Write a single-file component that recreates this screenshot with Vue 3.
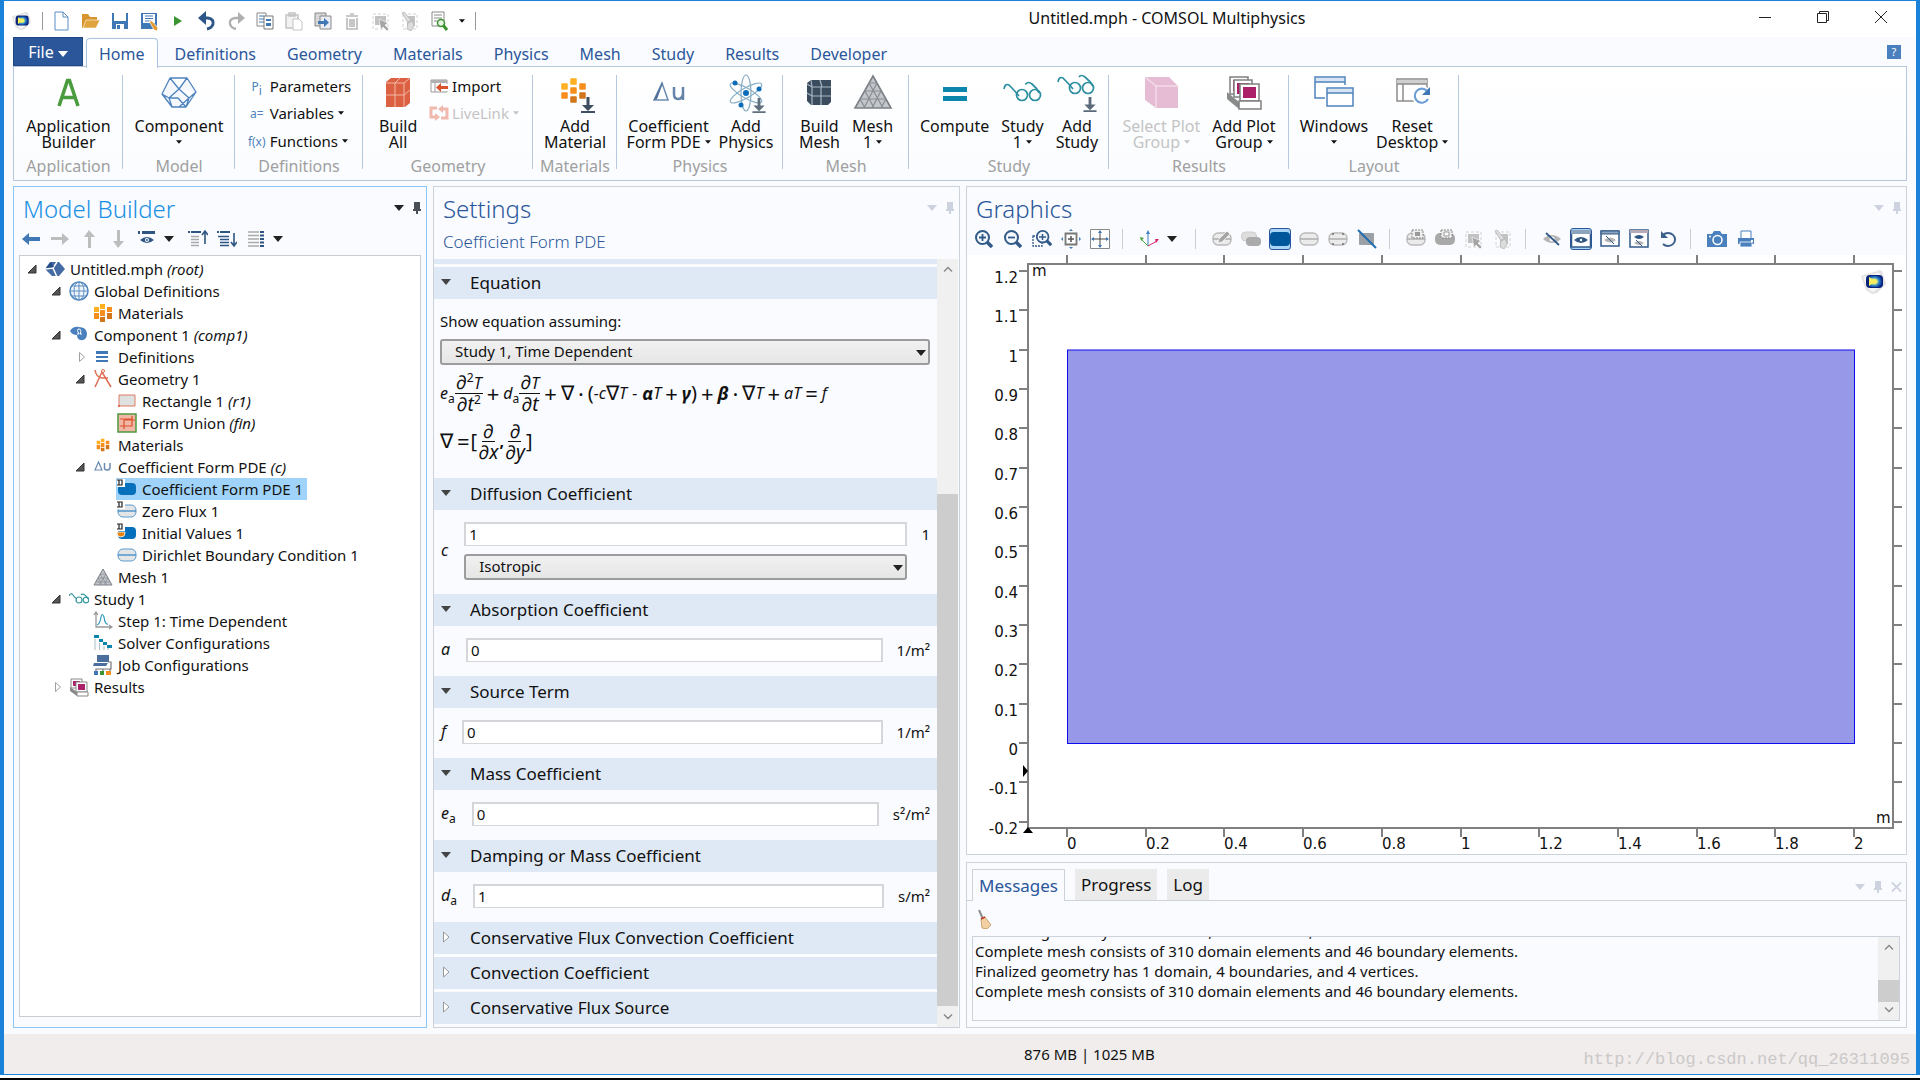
<script setup>
import { ref, computed } from 'vue'

// --- Quick access bar ---
const quickActions = [
  { icon: 'new', label: 'New' },
  { icon: 'open', label: 'Open' },
  { icon: 'save', label: 'Save' },
  { icon: 'save-as', label: 'Save as' },
  { icon: 'run', label: 'Run' },
  { icon: 'undo', label: 'Undo' },
  { icon: 'redo', label: 'Redo' },
  { icon: 'copy', label: 'Copy' },
  { icon: 'paste', label: 'Paste' },
  { icon: 'duplicate', label: 'Duplicate' },
  { icon: 'trash', label: 'Delete' },
  { icon: 'select-box', label: 'Select box' },
  { icon: 'clear-sel', label: 'Clear selection' },
  { icon: 'find', label: 'Find' }
]

// --- Ribbon ---
const tabs = ['Home', 'Definitions', 'Geometry', 'Materials', 'Physics', 'Mesh', 'Study', 'Results', 'Developer']
const activeTab = ref('Home')

const ribbon = [
  { name: 'Application', width: 109, big: [{ icon: 'app', lines: ['Application', 'Builder'] }] },
  { name: 'Model', width: 112, big: [{ icon: 'component', lines: ['Component', ''], menu: true }] },
  {
    name: 'Definitions',
    width: 128,
    big: [],
    small: [
      { glyph: 'P', sub: 'i', label: 'Parameters' },
      { glyph: 'a=', label: 'Variables', menu: true },
      { glyph: 'f(x)', label: 'Functions', menu: true }
    ]
  },
  {
    name: 'Geometry',
    width: 170,
    loose: true,
    big: [{ icon: 'build-all', lines: ['Build', 'All'] }],
    small: [
      { icon: 'import', label: 'Import' },
      { icon: 'livelink', label: 'LiveLink', menu: true, disabled: true }
    ]
  },
  { name: 'Materials', width: 84, big: [{ icon: 'add-material', lines: ['Add', 'Material'] }] },
  {
    name: 'Physics',
    width: 166,
    big: [
      { icon: 'delta-u-big', lines: ['Coefficient', 'Form PDE'], menu: true },
      { icon: 'add-physics', lines: ['Add', 'Physics'] }
    ]
  },
  {
    name: 'Mesh',
    width: 126,
    loose: true,
    big: [
      { icon: 'build-mesh', lines: ['Build', 'Mesh'] },
      { icon: 'mesh-big', lines: ['Mesh', '1'], menu: true }
    ]
  },
  {
    name: 'Study',
    width: 200,
    loose: true,
    big: [
      { icon: 'compute', lines: ['Compute', ''] },
      { icon: 'study-big', lines: ['Study', '1'], menu: true },
      { icon: 'add-study', lines: ['Add', 'Study'] }
    ]
  },
  {
    name: 'Results',
    width: 180,
    loose: true,
    big: [
      { icon: 'select-plot', lines: ['Select Plot', 'Group'], menu: true, disabled: true },
      { icon: 'add-plot', lines: ['Add Plot', 'Group'], menu: true }
    ]
  },
  {
    name: 'Layout',
    width: 170,
    big: [
      { icon: 'windows', lines: ['Windows', ''], menu: true },
      { icon: 'reset', lines: ['Reset', 'Desktop'], menu: true }
    ]
  }
]

// --- Model tree ---
const builderTools = [
  { icon: 'arrow-left', label: 'Previous' },
  { icon: 'arrow-right', label: 'Next' },
  { icon: 'arrow-up', label: 'Move up' },
  { icon: 'arrow-down', label: 'Move down' },
  { icon: 'show', label: 'Show' },
  { menu: true, label: 'Show options' },
  { icon: 'collapse', label: 'Collapse all' },
  { icon: 'expand', label: 'Expand all' },
  { icon: 'columns', label: 'Node text' },
  { menu: true, label: 'Node text options' }
]

const nodes = [
  { level: 0, icon: 'root', text: 'Untitled.mph', tag: '(root)', open: true },
  { level: 1, icon: 'globe', text: 'Global Definitions', open: true },
  { level: 2, icon: 'materials', text: 'Materials' },
  { level: 1, icon: 'comp', text: 'Component 1', tag: '(comp1)', open: true },
  { level: 2, icon: 'defs', text: 'Definitions', open: false },
  { level: 2, icon: 'geometry', text: 'Geometry 1', open: true },
  { level: 3, icon: 'rectangle', text: 'Rectangle 1', tag: '(r1)' },
  { level: 3, icon: 'union', text: 'Form Union', tag: '(fin)' },
  { level: 2, icon: 'materials-small', text: 'Materials' },
  { level: 2, icon: 'delta-u', text: 'Coefficient Form PDE', tag: '(c)', open: true },
  { level: 3, icon: 'domain', text: 'Coefficient Form PDE 1' },
  { level: 3, icon: 'boundary-d', text: 'Zero Flux 1' },
  { level: 3, icon: 'initial', text: 'Initial Values 1' },
  { level: 3, icon: 'boundary', text: 'Dirichlet Boundary Condition 1' },
  { level: 2, icon: 'mesh', text: 'Mesh 1' },
  { level: 1, icon: 'study', text: 'Study 1', open: true },
  { level: 2, icon: 'time', text: 'Step 1: Time Dependent' },
  { level: 2, icon: 'solver', text: 'Solver Configurations' },
  { level: 2, icon: 'job', text: 'Job Configurations' },
  { level: 1, icon: 'results', text: 'Results', open: false }
]
const selectedNode = ref('Coefficient Form PDE 1')

// --- Settings ---
const equationForm = ref('Study 1, Time Dependent')
const diffusion = ref('1')
const isotropy = ref('Isotropic')
const coefficients = ref([
  { id: 'absorption', title: 'Absorption Coefficient', symbol: 'a', sub: '', value: '0', unit: '1/m²' },
  { id: 'source', title: 'Source Term', symbol: 'f', sub: '', value: '0', unit: '1/m²' },
  { id: 'mass', title: 'Mass Coefficient', symbol: 'e', sub: 'a', value: '0', unit: 's²/m²' },
  { id: 'damping', title: 'Damping or Mass Coefficient', symbol: 'd', sub: 'a', value: '1', unit: 's/m²' }
])
const closedSections = ['Conservative Flux Convection Coefficient', 'Convection Coefficient', 'Conservative Flux Source']

// --- Graphics ---
const graphicsTools = [
  { icon: 'zoom-in', label: 'Zoom in' },
  { icon: 'zoom-out', label: 'Zoom out' },
  { icon: 'zoom-box', label: 'Zoom box' },
  { icon: 'zoom-sel', label: 'Zoom to selection' },
  { icon: 'zoom-ext', label: 'Zoom extents' },
  { sep: true },
  { icon: 'axes', label: 'View' },
  { menu: true, label: 'View options' },
  { sep: true },
  { icon: 'pick-obj', label: 'Select objects' },
  { icon: 'pick-both', label: 'Select entities' },
  { icon: 'pick-domain', label: 'Select domains', on: true },
  { icon: 'pick-boundary', label: 'Select boundaries' },
  { icon: 'pick-point', label: 'Select points' },
  { icon: 'pick-none', label: 'Selection off' },
  { sep: true },
  { icon: 'add-sel', label: 'Add to selection' },
  { icon: 'remove-sel', label: 'Remove from selection' },
  { icon: 'select-box', label: 'Select box' },
  { icon: 'clear-sel', label: 'Deselect box' },
  { sep: true },
  { icon: 'hide', label: 'Click and hide' },
  { icon: 'view-shown', label: 'View unhidden', on: true },
  { icon: 'view-hidden', label: 'View hidden' },
  { icon: 'view-all', label: 'View all' },
  { icon: 'reset-hide', label: 'Reset hiding' },
  { sep: true },
  { icon: 'camera', label: 'Image snapshot' },
  { icon: 'print', label: 'Print' }
]

// Plot area: model coordinates -> drawing units
const px = (x) => 100 + x * 393.5
const py = (y) => 488 - y * 393.5

const xTicks = computed(() => Array.from({ length: 11 }, (_, i) => {
  const v = i * 0.2
  return { label: String(+v.toFixed(1)), pos: Math.round(px(v)) }
}))
const yTicks = computed(() => Array.from({ length: 15 }, (_, i) => {
  const v = 1.2 - i * 0.1
  return { label: String(+v.toFixed(1) + 0), pos: Math.round(py(v)) }
}))

// --- Messages ---
const logTabs = ['Messages', 'Progress', 'Log']
const activeLog = ref('Messages')
const messages = [
  'Finalized geometry has 1 domain, 4 boundaries, and 4 vertices.',
  'Complete mesh consists of 310 domain elements and 46 boundary elements.',
  'Finalized geometry has 1 domain, 4 boundaries, and 4 vertices.',
  'Complete mesh consists of 310 domain elements and 46 boundary elements.'
]
</script>

<template>
  <div class="desktop">
    <!-- Icon sprite -->
    <svg class="sprite" aria-hidden="true">
      <defs>
        <radialGradient id="g-logo" cx="0.4" cy="0.5" r="0.6">
          <stop offset="0" stop-color="#fff36b" />
          <stop offset="0.35" stop-color="#e8e86a" />
          <stop offset="0.6" stop-color="#2f8fd0" />
          <stop offset="1" stop-color="#0b2a8c" />
        </radialGradient>
      </defs>
      <symbol id="i-logo" viewBox="0 0 26 24">
        <path d="M1 6 17 1l2-1 3 1 4 13-9 9-5 1-6-4Z" fill="#e2e2e2" />
        <path d="M3 7 18 3l2 1 3 10-8 7-3 1-5-4Z" fill="#f6f6f6" />
        <rect x="6" y="5" width="17" height="13" rx="4" fill="#0a2378" />
        <rect x="9" y="6" width="13" height="11" rx="2" fill="url(#g-logo)" />
        <path d="M9 7v9l7-5Z" fill="#f7ec5c" />
      </symbol>
      <symbol id="i-new" viewBox="0 0 20 20">
        <path d="M3 1h8l5 5v13H3Z M11 1v5h5" fill="#fff" stroke="#5b8dc4" />
      </symbol>
      <symbol id="i-open" viewBox="0 0 20 20">
        <path d="M1 3h6l2 3h7v3H6L3 17H1Z" fill="#d9952d" />
        <path d="M5 9h14l-4 8H2Z" fill="#e0a33e" stroke="#fff" stroke-width="0.6" />
      </symbol>
      <symbol id="i-save" viewBox="0 0 20 20">
        <path d="M2 2h16v16H2Z" fill="#3f78b5" />
        <path d="M4 2h12v8H4Z M6 13h8v5H6Z" fill="#fff" />
        <path d="M7 14h3v4H7Z" fill="#3f78b5" />
      </symbol>
      <symbol id="i-save-as" viewBox="0 0 20 20">
        <path d="M2 2h16v16H2Z" fill="#3f78b5" />
        <path d="M4 3h12v9H4Z" fill="#fff" />
        <path d="M6 5h8M6 7.500h8M6 10h6M6 14h5v4" stroke="#3f78b5" fill="none" />
        <path d="m10 10 3 0 6 7-1 3-3-1Z" fill="#e59a2f" stroke="#fff" stroke-width="0.7" />
      </symbol>
      <symbol id="i-run" viewBox="0 0 20 20"><path d="M6 5l8 5-8 5Z" fill="#3a9430" /></symbol>
      <symbol id="i-undo" viewBox="0 0 20 20">
        <path d="M4 7h7q6 1 5 6-1 4-6 5" fill="none" stroke="#2c5688" stroke-width="3" />
        <path d="M9 0v14L1 7Z" fill="#2c5688" />
      </symbol>
      <symbol id="i-redo" viewBox="0 0 20 20">
        <path d="M16 7H9Q3 8 4 13q1 4 6 5" fill="none" stroke="#b0b0b0" stroke-width="2.500" />
        <path d="M12 1v12l7-6Z" fill="#b0b0b0" />
      </symbol>
      <symbol id="i-copy" viewBox="0 0 20 20">
        <path d="M2 2h9v13H2Z" fill="#fff" stroke="#888" />
        <path d="M4 5h5M4 8h5M4 11h5" stroke="#3f78b5" />
        <path d="M9 5h9v13H9Z" fill="#fff" stroke="#777" />
        <path d="M11 8h5v2h-5Zm0 4h5v3h-5Z" fill="#3f78b5" />
      </symbol>
      <symbol id="i-paste" viewBox="0 0 20 20">
        <path d="M2 4h12v13H2Z M5 2h6v3H5Z" fill="#f2f2f2" stroke="#c4c4c4" stroke-width="1.500" />
        <path d="M9 8h6l3 3v8H9Z" fill="#fff" stroke="#c4c4c4" />
      </symbol>
      <symbol id="i-duplicate" viewBox="0 0 20 20">
        <path d="M2 2h11v13H2Z" fill="#d8d8d8" stroke="#888" />
        <path d="M7 5h11v13H7Z" fill="#e9eef5" stroke="#888" />
        <path d="M5 10h6V7l5 4.500-5 4.500v-3H5Z" fill="#3f78b5" />
      </symbol>
      <symbol id="i-trash" viewBox="0 0 20 20">
        <path d="M4 5h12M8 3h4M5 7v11h10V7M8 8v8M10 8v8M12 8v8" stroke="#b9b9b9" stroke-width="1.600" fill="none" />
      </symbol>
      <symbol id="i-select-box" viewBox="0 0 20 20">
        <path d="M2 3h15v15H2Z" fill="none" stroke="#d2d2d2" stroke-dasharray="3 2" />
        <path d="M4 5h11v9H4Z" fill="#c2c2c2" />
        <path d="m8 8 9 4-3 2 4 4-2 2-4-4-2 3Z" fill="#a5a5a5" stroke="#fff" stroke-width="0.6" />
      </symbol>
      <symbol id="i-clear-sel" viewBox="0 0 20 20">
        <path d="M3 3h14v15H3Z" fill="none" stroke="#d2d2d2" stroke-dasharray="3 2" />
        <path d="M7 5h8v10H7Z" fill="#c2c2c2" />
        <path d="M2 2l6 10 4-2L4 1Z M8 11l4-2 2 6-3 5-4-2Z" fill="#dcdcdc" stroke="#b8b8b8" stroke-width="0.800" />
      </symbol>
      <symbol id="i-find" viewBox="0 0 20 20">
        <path d="M3 1h12v14H3Z" fill="#fff" stroke="#888" />
        <path d="M5 4h8M5 7h8M5 10h5" stroke="#888" />
        <circle cx="12" cy="12" r="3.500" fill="#e8f3e6" stroke="#3a9430" stroke-width="1.500" />
        <path d="m14 14 4 5" stroke="#3a9430" stroke-width="3" />
      </symbol>

      <!-- Ribbon, big -->
      <symbol id="i-app" viewBox="0 0 40 40"><path d="M11 33 19.500 7.500h2L30 33M14 24.500h13" fill="none" stroke="#4a9a3e" stroke-width="3.500" /></symbol>
      <symbol id="i-component" viewBox="0 0 40 40">
        <path d="M11 5h17l9 14-10 15H13L3 21Z M11 5l9 11 8-11M20 16 10 25M10 25 3 21M20 16l10 9 7-6M10 25l3 9M30 25l-3 9M10 25l9 0 8 9M30 25 20 34" fill="#f4f8fd" stroke="#4f83bd" stroke-width="1.300" stroke-linejoin="round" />
      </symbol>
      <symbol id="i-build-all" viewBox="0 0 40 40">
        <path d="M8 9l5-4h19v25l-5 4H8Z" fill="#db6142" />
        <path d="M8 10h18v24M26 10l6-5M17 10v24M8 22h18l6-5M17 10l5-5" fill="none" stroke="#f5b9a8" />
      </symbol>
      <symbol id="i-download" viewBox="0 0 14 16"><path d="M5.500 0h3v8H13L7 14 1 8h4.500Z M0 14h14v2H0Z" /></symbol>
      <symbol id="i-add-material" viewBox="0 0 40 40">
        <g stroke-linejoin="round" stroke-width="1.500">
          <path d="M16 6h5v5h-5Z M7 11h5v5H7Z" fill="#fdb022" stroke="#fdb022" />
          <path d="M25 11h5v5h-5Z M16 15h5v5h-5Z M7 20h5v5H7Z" fill="#f68e1e" stroke="#f68e1e" />
          <path d="M25 20h5v5h-5Z M16 24h5v5h-5Z" fill="#d2761b" stroke="#d2761b" />
        </g>
        <use href="#i-download" x="26" y="24" width="14" height="16" fill="#3d4f60" />
      </symbol>
      <symbol id="i-delta-u-big" viewBox="0 0 40 40">
        <path d="M5 27 13 10l6 17Z" fill="none" stroke="#6b8bb0" stroke-width="1.500" />
        <path d="M5 27 13 10l1 0-6 16Z" fill="#4a6c97" />
        <path d="M25 14v7q0 5 4 5t5-5v-7M34 14v13" fill="none" stroke="#6684aa" stroke-width="2.500" />
      </symbol>
      <symbol id="i-add-physics" viewBox="0 0 40 40">
        <g fill="none" stroke="#88aec4" stroke-width="1.200">
          <ellipse cx="20" cy="20" rx="5" ry="18" />
          <ellipse cx="20" cy="20" rx="5" ry="18" transform="rotate(60 20 20)" />
          <ellipse cx="20" cy="20" rx="5" ry="18" transform="rotate(120 20 20)" />
        </g>
        <g fill="#0a6cb8"><circle cx="20" cy="20" r="3" /><circle cx="9" cy="10" r="2.500" /><circle cx="33" cy="16" r="2.500" /><circle cx="15" cy="32" r="2.500" /></g>
        <use href="#i-download" x="26" y="25" width="14" height="15" fill="#5f6f7d" />
      </symbol>
      <symbol id="i-build-mesh" viewBox="0 0 40 40">
        <path d="M8 10l4-3h20v22l-3 3H12l-4-4Z" fill="#3a4c5e" />
        <path d="M8 11l5 3h19M13 14v18M22 14v18M8 20l5 3h19M21 7l2 7M12 7l1 7" fill="none" stroke="#a9b7c4" stroke-width="1.200" />
      </symbol>
      <symbol id="i-mesh-big" viewBox="0 0 40 40">
        <path d="M20 3 38 35H2Z" fill="#c3c6ca" stroke="#7c8086" stroke-width="1.600" />
        <path d="M16 10h8M12 18h16M7 26h26M16 10l14 25M12 18l9 17M7 26l5 9M24 10 11 35M28 18l-9 17M33 26l-5 9" stroke="#888d94" stroke-width="1.200" fill="none" />
      </symbol>
      <symbol id="i-compute" viewBox="0 0 40 40"><path d="M8 14h24v5H8Zm0 9h24v5H8Z" fill="#0d86ad" /></symbol>
      <symbol id="i-study-big" viewBox="0 0 40 40">
        <path d="M2 16q1-6 5-4 6 6 10 11M24 11q2-3 6 0 5 4 7 9M24 11h-1" fill="none" stroke="#2a8da0" stroke-width="1.700" />
        <circle cx="20" cy="22" r="5.500" fill="none" stroke="#2a8da0" stroke-width="1.700" />
        <circle cx="33" cy="22" r="5.500" fill="none" stroke="#2a8da0" stroke-width="1.700" />
      </symbol>
      <symbol id="i-add-study" viewBox="0 0 40 40">
        <g fill="none" stroke="#2a8da0" stroke-width="1.700">
          <path d="M1 9q1-6 5-4 6 6 10 11M22 4q2-3 6 0 5 4 8 9" />
          <circle cx="18" cy="15" r="5.500" /><circle cx="31" cy="15" r="5.500" />
        </g>
        <use href="#i-download" x="26" y="24" width="14" height="15" fill="#5a6a78" />
      </symbol>
      <symbol id="i-select-plot" viewBox="0 0 40 40">
        <path d="M4 4h24l9 9v22H15L4 27Z" fill="#e6bcd4" />
        <path d="M4 4l11 9h22M15 13v22" fill="none" stroke="#f3dce8" stroke-width="1.500" />
      </symbol>
      <symbol id="i-add-plot" viewBox="0 0 40 40">
        <path d="M3 19l12 10v7L3 26Z" fill="#888b8a" />
        <path d="M6 4h18v17H6Z" fill="#fff" stroke="#808080" stroke-width="1.500" /><path d="M9 7h12v11H9Z" fill="#ac1f69" />
        <path d="M10 7h18v17H10Z" fill="#fff" stroke="#808080" stroke-width="1.500" /><path d="M13 10h12v11H13Z" fill="#ac1f69" />
        <path d="M16 11h19v17H16Z" fill="#fff" stroke="#808080" stroke-width="1.500" /><path d="M19 14h13v11H19Z" fill="#ac1f69" />
        <path d="M15 28h22v8H15Z" fill="#fff" stroke="#808080" stroke-width="1.500" />
      </symbol>
      <symbol id="i-windows" viewBox="0 0 40 40">
        <path d="M1 4h30v21H1Z" fill="#fff" stroke="#4f83bd" stroke-width="1.500" /><path d="M2 5h28v4H2Z" fill="#d8e4f2" /><path d="M1 9h30" stroke="#4f83bd" stroke-width="1.500" />
        <path d="M11 12h30v24H11Z" fill="#fff" />
        <path d="M13 15h26v18H13Z" fill="#fff" stroke="#4f83bd" stroke-width="1.500" /><path d="M14 16h24v4H14Z" fill="#d8e4f2" /><path d="M13 20h26" stroke="#4f83bd" stroke-width="1.500" />
      </symbol>
      <symbol id="i-reset" viewBox="0 0 40 40">
        <path d="M5 6h30v22H5Z" fill="#fff" stroke="#8c8c8c" stroke-width="1.500" /><path d="M5 7h30v4H5Z" fill="#cfcfcf" /><path d="M5 11h30M11 11v17" stroke="#8c8c8c" stroke-width="1.500" />
        <circle cx="30" cy="23" r="10" fill="#fff" />
        <path d="M35 18a7 7 0 1 0 1 8" fill="none" stroke="#6d9fd4" stroke-width="2.200" />
        <path d="M38 14v8h-8Z" fill="#3f78b5" />
      </symbol>

      <!-- Ribbon, small -->
      <symbol id="i-import" viewBox="0 0 20 20">
        <path d="M2 4h16v12H2Z" fill="#fff" stroke="#999" /><path d="M2 4h16v3H2Z" fill="#b0b0b0" /><path d="M6 7v9" stroke="#999" />
        <path d="M8 8h12v7H8Z" fill="#fff" /><path d="M7 11.500 12 7v3h7v3h-7v3Z" fill="#d9532c" />
      </symbol>
      <symbol id="i-livelink" viewBox="0 0 20 20">
        <path d="M8 5H2v9h4M12 15h6V6h-4" fill="none" stroke="#f1b9ae" stroke-width="3" /><path d="M6 10v8l5-4ZM14 2v8L9 6Z" fill="#f1b9ae" />
      </symbol>

      <!-- Model builder toolbar -->
      <symbol id="i-arrow-left" viewBox="0 0 20 20"><path d="M1 10 8 4v4h11v4H8v4Z" fill="#3f78b5" /></symbol>
      <symbol id="i-arrow-right" viewBox="0 0 20 20"><path d="M19 10 12 4v4H1v3h11v5Z" fill="#bdbdbd" /></symbol>
      <symbol id="i-arrow-up" viewBox="0 0 20 20"><path d="M10 1 16 8h-4v11H9V8H5Z" fill="#bdbdbd" /></symbol>
      <symbol id="i-arrow-down" viewBox="0 0 20 20"><path d="M10 19 16 12h-4V1H9v11H5Z" fill="#bdbdbd" /></symbol>
      <symbol id="i-show" viewBox="0 0 20 20">
        <path d="M1 2h2v3H1ZM5 2h13v3H5Z" fill="#2f5582" /><path d="M3 11q7-6 14 0-7 6-14 0Z" fill="#2f5582" /><circle cx="10" cy="11" r="2" fill="#fff" /><circle cx="10" cy="11" r="1" fill="#2f5582" />
      </symbol>
      <symbol id="i-collapse" viewBox="0 0 20 20">
        <path d="M0 2h2v2H0ZM3 2h10v2H3Z" fill="#2f5582" /><path d="M3 7.500h8M3 10.500h8M3 13.500h8M3 16.500h8" stroke="#aaa" stroke-width="1.500" />
        <path d="M17 3v12M14 6l3-4 3 4" fill="none" stroke="#2f5582" stroke-width="1.600" />
      </symbol>
      <symbol id="i-expand" viewBox="0 0 20 20">
        <path d="M0 2h2v2H0ZM3 2h10v2H3Z" fill="#2f5582" /><path d="M1 7.500h11M3 10.500h9M3 13.500h9M3 16.500h9" stroke="#2f5582" stroke-width="1.500" />
        <path d="M17 4v12M14 13l3 4 3-4" fill="none" stroke="#2f5582" stroke-width="1.600" />
      </symbol>
      <symbol id="i-columns" viewBox="0 0 20 20">
        <path d="M2 3h11M2 6.500h11M2 10h11M2 13.500h11M2 17h11" stroke="#aaa" stroke-width="1.500" /><path d="M14 3h4M14 6.500h4M14 10h4M14 13.500h4M14 17h4" stroke="#2f5582" stroke-width="2" />
      </symbol>

      <!-- Tree -->
      <symbol id="i-root" viewBox="0 0 20 20">
        <path d="M5 3h9l6 7-6 7H7l-7-7Z" fill="#446ba3" /><path d="M0 10l8-1 4-6M8 9l4 9" fill="none" stroke="#fff" stroke-width="1.500" /><path d="M1 9l5-6 3 5Z" fill="#274c85" />
      </symbol>
      <symbol id="i-globe" viewBox="0 0 20 20">
        <circle cx="10" cy="10" r="9" fill="#eef4fa" stroke="#4f83bd" stroke-width="1.500" /><path d="M10 1v18M1 10h18M3 5h14M3 15h14" stroke="#5f8fc4" /><ellipse cx="10" cy="10" rx="5" ry="9" fill="none" stroke="#5f8fc4" />
      </symbol>
      <symbol id="i-materials" viewBox="0 0 20 20">
        <path d="M7 1h5v5H7ZM1 4h5v5H1Z" fill="#fdb022" /><path d="M14 4h5v5h-5ZM7 7h5v6H7ZM1 10h5v6H1Z" fill="#f68e1e" /><path d="M14 10h5v6h-5ZM7 14h5v5H7Z" fill="#d2761b" />
      </symbol>
      <symbol id="i-materials-small" viewBox="0 0 20 20"><use href="#i-materials" x="3" y="3" width="14" height="14" /></symbol>
      <symbol id="i-comp" viewBox="0 0 20 20">
        <path d="M1 6q3-5 9-4 7 0 8 6 0 6-4 7-6 1-6-5-5 0-7-4Z" fill="#4a80bd" /><path d="M8 9h2q-3-5 0-5t1 5h2" fill="none" stroke="#fff" />
      </symbol>
      <symbol id="i-defs" viewBox="0 0 20 20"><path d="M3 4h12v3H3Zm0 5h12v2H3Zm0 4h12v2H3Z" fill="#3f78b5" /></symbol>
      <symbol id="i-geometry" viewBox="0 0 20 20"><path d="M2 1q1 7 7 8h6M2 18 9 3l9 15" fill="none" stroke="#df6c52" stroke-width="1.500" /><circle cx="10" cy="2" r="1.500" fill="#fff" stroke="#df6c52" /></symbol>
      <symbol id="i-rectangle" viewBox="0 0 20 20"><path d="M2 4h16v11H2Z" fill="#dfe0e0" stroke="#df7a62" /><path d="M1 14h2v2H1Z" fill="#df6c52" /></symbol>
      <symbol id="i-union" viewBox="0 0 20 20"><path d="M1 1h18v18H1Z" fill="#f2b6a6" stroke="#4a9a3e" stroke-width="1.500" /><path d="M3 6h12V3M3 13h12V4M7 7h11M7 7v9" fill="none" stroke="#d9532c" stroke-width="1.200" /></symbol>
      <symbol id="i-delta-u" viewBox="0 0 20 20"><path d="M2 13 5.500 5 9 13Z" fill="none" stroke="#6b8bb0" stroke-width="1.200" /><path d="M11.500 6v5q0 2 2.500 2t3-2V6" fill="none" stroke="#6b8bb0" stroke-width="1.500" /></symbol>
      <symbol id="i-d-mark" viewBox="0 0 20 20"><path d="M0 0h8v8H0Z" fill="#fff" /><path d="M0 1h5v5H0M2 1v5" fill="none" stroke="#222" stroke-width="1.200" /></symbol>
      <symbol id="i-domain" viewBox="0 0 20 20"><rect x="1" y="4" width="18" height="12" rx="4" fill="#0670bd" /><use href="#i-d-mark" width="20" height="20" /></symbol>
      <symbol id="i-boundary" viewBox="0 0 20 20"><rect x="1" y="4" width="18" height="12" rx="5" fill="#e3e5e7" stroke="#5c9bd0" /><path d="M1 10h18" stroke="#2d82c4" stroke-width="1.200" /></symbol>
      <symbol id="i-boundary-d" viewBox="0 0 20 20"><use href="#i-boundary" width="20" height="20" /><use href="#i-d-mark" width="20" height="20" /></symbol>
      <symbol id="i-initial" viewBox="0 0 20 20"><use href="#i-domain" width="20" height="20" /><path d="M0 9h8v1a4 4 0 0 1-8 0Z" fill="#e8820c" stroke="#fff" stroke-width="0.800" /></symbol>
      <symbol id="i-mesh" viewBox="0 0 20 20"><path d="M10 2 19 18H1Z" fill="#c3c6ca" stroke="#7c8086" /><path d="M7 7h6M5 11h10M3 15h14M7 7l7 11M5 11l4 7M13 7 6 18M15 11l-4 7" stroke="#888d94" stroke-width="0.800" /></symbol>
      <symbol id="i-study" viewBox="0 0 20 20"><path d="M0 7q2-4 4-1 2 3 4 4M12 6q3-3 7 4" fill="none" stroke="#35979f" stroke-width="1.200" /><circle cx="10" cy="11" r="3" fill="none" stroke="#35979f" stroke-width="1.200" /><circle cx="17" cy="11" r="2.800" fill="none" stroke="#35979f" stroke-width="1.200" /></symbol>
      <symbol id="i-time" viewBox="0 0 20 20"><path d="M3 1v15h15M1 4l2-3 2 3M16 14l3 2-3 2" fill="none" stroke="#999" stroke-width="1.300" /><path d="M4 14Q7 13 8 6q1-5 3 0 1 8 4 7" fill="none" stroke="#2c9ab8" stroke-width="1.200" /></symbol>
      <symbol id="i-solver" viewBox="0 0 20 20"><path d="M1 2h5v3H1ZM6 6h4v3H6ZM10 9h4v3h-4ZM14 12h5v3h-5Z" fill="#0d86ad" /><path d="M2 6v11M6.500 10v7M11 13v4M15 15v2" stroke="#a9bcc5" /></symbol>
      <symbol id="i-job" viewBox="0 0 20 20"><path d="M4 0h12v7H4ZM1 8h14l-2 3H0Z" fill="#4a6f9f" /><path d="M15 7h3v7H3v2M10 14v2M17 14v2" fill="none" stroke="#777" stroke-width="1.200" /><path d="M1 16h4v4H1Z" fill="#3f78b5" /><path d="M7 16h4v4H7Z" fill="#3a9430" /><path d="M13 16h5v4h-5Z" fill="#f68e1e" /></symbol>
      <symbol id="i-results" viewBox="0 0 20 20"><path d="M1 10l7 5v4l-7-5Z" fill="#888" /><path d="M2 2h11v9H2Z" fill="#fff" stroke="#888" /><path d="M4 4h7v5H4Z" fill="#ac1f69" /><path d="M7 5h11v10H7Z" fill="#fff" stroke="#888" /><path d="M9 7h7v6H9Z" fill="#ac1f69" /><path d="M8 15h11v4H8Z" fill="#fff" stroke="#888" /></symbol>

      <!-- Graphics toolbar -->
      <symbol id="i-lens" viewBox="0 0 20 20"><circle cx="8.500" cy="8.500" r="6.500" fill="#f4f8fc" stroke="#315a88" stroke-width="2" /><path d="m13 13 5 5" stroke="#315a88" stroke-width="3.500" /></symbol>
      <symbol id="i-zoom-in" viewBox="0 0 20 20"><use href="#i-lens" width="20" height="20" /><path d="M5 8.500h7M8.500 5v7" stroke="#315a88" stroke-width="1.800" /></symbol>
      <symbol id="i-zoom-out" viewBox="0 0 20 20"><use href="#i-lens" width="20" height="20" /><path d="M5 8.500h7" stroke="#315a88" stroke-width="1.800" /></symbol>
      <symbol id="i-zoom-box" viewBox="0 0 20 20"><path d="M1 7h9v10H1Z" fill="none" stroke="#315a88" stroke-dasharray="2 1" stroke-width="1.300" /><use href="#i-lens" x="3" width="18" height="18" /><path d="M7 8h7M10.500 5v6" stroke="#315a88" stroke-width="1.500" /></symbol>
      <symbol id="i-zoom-sel" viewBox="0 0 20 20"><path d="M4.500 4.500h11v11h-11Z" fill="#fff" stroke="#777" stroke-width="1.800" /><path d="M7 10h6M10 7v6" stroke="#555" stroke-width="1.500" /><path d="M8 2l2-2 2 2ZM8 18l2 2 2-2ZM2 8l-2 2 2 2ZM18 8l2 2-2 2Z" fill="#3f78b5" /></symbol>
      <symbol id="i-zoom-ext" viewBox="0 0 20 20"><path d="M.5.500h19v19H.5Z" fill="#fff" stroke="#888" /><path d="M10 2v16M2 10h16" stroke="#444" /><path d="M8 4l2-3 2 3ZM8 16l2 3 2-3ZM4 8l-3 2 3 2ZM16 8l3 2-3 2Z" fill="#3f78b5" /></symbol>
      <symbol id="i-axes" viewBox="0 0 20 20"><path d="M9 17V3" stroke="#3f7fc0" /><path d="M7 5l2-4 2 4Z" fill="#3f7fc0" /><path d="M9 17 3 11" stroke="#49a33d" /><path d="M1 8l4 1-3 3Z" fill="#49a33d" /><path d="m9 17 9-5" stroke="#d8266e" /><path d="m20 10-4 0 1 4Z" fill="#d8266e" /></symbol>
      <symbol id="i-slab" viewBox="0 0 20 20"><rect x="1" y="4" width="18" height="12" rx="5" fill="#ebebeb" stroke="#bbb" stroke-width="1.400" /><path d="M1 10h18" stroke="#aaa" stroke-width="1.400" /></symbol>
      <symbol id="i-pick-obj" viewBox="0 0 20 20"><use href="#i-slab" width="20" height="20" /><path d="m6 14 1-4 8-8 3 3-8 8Z" fill="#a5a5a5" stroke="#fff" stroke-width="0.700" /></symbol>
      <symbol id="i-pick-both" viewBox="0 0 20 20"><rect x="0.500" y="3" width="15" height="9" rx="4" fill="#dedede" stroke="#ccc" /><rect x="5" y="8" width="15" height="9" rx="4" fill="#aaa" /></symbol>
      <symbol id="i-pick-domain" viewBox="0 0 20 20"><rect x="0" y="3" width="20" height="14" rx="4" fill="#00569b" /></symbol>
      <symbol id="i-pick-boundary" viewBox="0 0 20 20"><use href="#i-slab" width="20" height="20" /></symbol>
      <symbol id="i-pick-point" viewBox="0 0 20 20"><use href="#i-slab" width="20" height="20" /><path d="M4 4h2v2H4ZM14 4h2v2h-2ZM4 14h2v2H4ZM14 14h2v2h-2Z" fill="#888" /></symbol>
      <symbol id="i-pick-none" viewBox="0 0 20 20"><rect x="2" y="4" width="15" height="12" rx="1" fill="#9ba0a6" /><path d="M1 1l18 18" stroke="#1f6cb0" stroke-width="2" /></symbol>
      <symbol id="i-add-sel" viewBox="0 0 20 20"><use href="#i-slab" width="20" height="20" /><path d="M6 1h11v8H6Z" fill="#eee" stroke="#888" stroke-dasharray="2 1" /><path d="M9 3h5v4H9Z" fill="#999" /></symbol>
      <symbol id="i-remove-sel" viewBox="0 0 20 20"><rect x="0" y="4" width="20" height="12" rx="5" fill="#a9a9a9" /><path d="M6 1h11v8H6Z" fill="#eee" stroke="#888" stroke-dasharray="2 1" /><path d="M9 3h5v4H9Z" fill="#fff" stroke="#999" /></symbol>
      <symbol id="i-hide" viewBox="0 0 20 20"><path d="M1 10q9-8 18 0-9 8-18 0Z" fill="#b5b5b5" /><circle cx="10" cy="10" r="2.500" fill="#fff" /><path d="M4 4l13 12" stroke="#315a88" stroke-width="1.800" /></symbol>
      <symbol id="i-view-shown" viewBox="0 0 20 20"><path d="M.5 3h19v15H.5Z" fill="#fff" stroke="#315a88" stroke-width="1.500" /><path d="M0 1h20v4H0Z" fill="#8da2bd" /><path d="M3 11q7-6 14 0-7 6-14 0Z" fill="#2f5582" /><circle cx="10" cy="11" r="1.200" fill="#fff" /></symbol>
      <symbol id="i-view-hidden" viewBox="0 0 20 20"><path d="M1 2h18v15H1Z" fill="#fff" stroke="#315a88" stroke-width="1.500" /><path d="M1 2h18v3H1Z" fill="#8da2bd" stroke="#315a88" /><path d="M4 11q6-5 12 0-6 5-12 0Z" fill="#b5b5b5" /><path d="m6 7 8 8" stroke="#315a88" /></symbol>
      <symbol id="i-view-all" viewBox="0 0 20 20"><path d="M1 1h18v17H1Z" fill="#fff" stroke="#315a88" stroke-width="1.500" /><path d="M1 1h18v3H1Z" fill="#b5aab5" /><path d="M5 8q5-4 10 0-5 4-10 0Z" fill="#2f5582" /><path d="M5 14q5-4 10 0-5 4-10 0Z" fill="#b5b5b5" /><path d="m7 11 6 6" stroke="#315a88" /></symbol>
      <symbol id="i-reset-hide" viewBox="0 0 20 20"><path d="M5 6a7 6.500 0 1 1 0 9" fill="none" stroke="#3c5f8c" stroke-width="2" /><path d="M3 2v7h7Z" fill="#3c5f8c" /></symbol>
      <symbol id="i-camera" viewBox="0 0 20 20"><path d="M0 5h5l2-3h6l2 3h5v13H0Z" fill="#4a80bd" /><circle cx="10.500" cy="11" r="4.500" fill="#4a80bd" stroke="#fff" stroke-width="1.500" /><circle cx="3" cy="7.500" r="1" fill="#fff" /></symbol>
      <symbol id="i-print" viewBox="0 0 20 20"><path d="M5 2h10v8H5Z" fill="#fff" stroke="#4a80bd" /><path d="M2 9h16v6H2Z" fill="#4a80bd" /><path d="M4 13h12v5H4Z" fill="#4a80bd" stroke="#fff" stroke-width="0.800" /><path d="M15 11h2v2h-2Z" fill="#fff" /></symbol>

      <!-- Shared -->
      <symbol id="i-caret" viewBox="0 0 10 6"><path d="M0 0h10L5 6Z" /></symbol>
      <symbol id="i-pin" viewBox="0 0 10 14"><path d="M2 1h6v7h1v2H6v3H4v-3H1V8h1Z" /></symbol>
      <symbol id="i-broom" viewBox="0 0 20 20"><path d="M4 1l4 9" stroke="#8c8c8c" stroke-width="2" /><path d="m6 10 4-2 6 8-4 4-5-1Z" fill="#f3d0a2" stroke="#c2935f" stroke-width="0.800" /><path d="m6 10 4-2" stroke="#c0392b" stroke-width="1.500" /></symbol>
    </svg>

    <div class="window">
      <header class="titlebar">
        <svg class="app-logo"><use href="#i-logo" /></svg>
        <span class="bar"></span>
        <button v-for="a in quickActions" :key="a.icon" class="tool" :aria-label="a.label">
          <svg class="ic20"><use :href="'#i-' + a.icon" /></svg>
        </button>
        <button class="quick-menu" aria-label="Customize"><svg class="caret-s"><use href="#i-caret" /></svg></button>
        <span class="bar"></span>
        <div class="title">Untitled.mph - COMSOL Multiphysics</div>
        <button class="win-btn" aria-label="Minimize"><svg viewBox="0 0 14 14"><path d="M1 7.500h12" /></svg></button>
        <button class="win-btn" aria-label="Restore"><svg viewBox="0 0 14 14"><path d="M1.500 3.500h9v9h-9Z M3.500 3.500v-2h9v9h-2" /></svg></button>
        <button class="win-btn" aria-label="Close"><svg viewBox="0 0 14 14"><path d="M1 1l12 12M13 1 1 13" /></svg></button>
      </header>

      <nav class="tabs">
        <button class="file-tab">File <svg class="file-caret"><use href="#i-caret" /></svg></button>
        <button
          v-for="tab in tabs"
          :key="tab"
          class="tab"
          :class="{ 'tab-active': tab === activeTab }"
          @click="activeTab = tab"
        >{{ tab }}</button>
        <button class="help">?</button>
      </nav>

      <section class="ribbon">
        <div v-for="group in ribbon" :key="group.name" class="group" :style="{ width: group.width + 'px' }">
          <div class="group-body" :class="{ loose: group.loose }">
            <button
              v-for="b in group.big"
              :key="b.icon"
              class="big"
              :class="{ disabled: b.disabled }"
              :disabled="b.disabled"
            >
              <svg class="ic40"><use :href="'#i-' + b.icon" /></svg>
              <span>{{ b.lines[0] }}</span>
              <span class="second">{{ b.lines[1] }}<svg v-if="b.menu" class="caret-s"><use href="#i-caret" /></svg></span>
            </button>
            <div v-if="group.small" class="small-list">
              <button
                v-for="s in group.small"
                :key="s.label"
                class="small"
                :class="{ disabled: s.disabled }"
                :disabled="s.disabled"
              >
                <svg v-if="s.icon" class="ic20"><use :href="'#i-' + s.icon" /></svg>
                <span v-else class="glyph">{{ s.glyph }}<sub v-if="s.sub">{{ s.sub }}</sub></span>
                <span>{{ s.label }}</span>
                <svg v-if="s.menu" class="caret-s"><use href="#i-caret" /></svg>
              </button>
            </div>
          </div>
          <div class="group-name">{{ group.name }}</div>
        </div>
      </section>

      <main class="work">
        <!-- Model Builder -->
        <section class="panel panel-active">
          <div class="panel-head">
            <h2>Model Builder</h2>
            <svg class="caret-m"><use href="#i-caret" /></svg>
            <svg class="pin"><use href="#i-pin" /></svg>
          </div>
          <div class="toolbar">
            <button v-for="t in builderTools" :key="t.label" :class="t.menu ? 'tool-menu' : 'tool'" :aria-label="t.label">
              <svg v-if="t.menu" class="caret-m"><use href="#i-caret" /></svg>
              <svg v-else class="ic20"><use :href="'#i-' + t.icon" /></svg>
            </button>
          </div>
          <ul class="tree">
            <li v-for="(n, i) in nodes" :key="i" class="node" :style="{ paddingLeft: n.level * 24 + 'px' }">
              <span class="twist">
                <svg v-if="n.open === true" viewBox="0 0 10 10"><path d="M9 1v8H1Z" fill="#555" stroke="#333" /></svg>
                <svg v-if="n.open === false" viewBox="0 0 10 10"><path d="M4.500 .5v9L9.500 5Z" fill="#fff" stroke="#a0a0a0" /></svg>
              </span>
              <span class="node-label" :class="{ selected: n.text === selectedNode }" @click="selectedNode = n.text">
                <svg class="ic20"><use :href="'#i-' + n.icon" /></svg>
                <span>{{ n.text }} <i v-if="n.tag">{{ n.tag }}</i></span>
              </span>
            </li>
          </ul>
        </section>

        <!-- Settings -->
        <section class="panel">
          <div class="panel-head">
            <h2>Settings</h2>
            <svg class="caret-m"><use href="#i-caret" /></svg>
            <svg class="pin"><use href="#i-pin" /></svg>
          </div>
          <div class="subtitle">Coefficient Form PDE</div>
          <div class="scroll-row">
            <div class="sections">
              <div class="strip"></div>
              <h3 class="section"><svg class="caret-m"><use href="#i-caret" /></svg>Equation</h3>
              <div class="equation-body">
                <label for="eq-form">Show equation assuming:</label>
                <div class="select-wrap">
                  <select id="eq-form" v-model="equationForm"><option>Study 1, Time Dependent</option></select>
                  <svg class="caret-m"><use href="#i-caret" /></svg>
                </div>
                <div class="formula">
                  <i>e</i><sub>a</sub>
                  <span class="frac"><span><i>∂</i><sup>2</sup><i class="v">T</i></span><span><i>∂t</i><sup>2</sup></span></span>
                  <b class="op">+</b><i>d</i><sub>a</sub>
                  <span class="frac"><span><i>∂</i><i class="v">T</i></span><span><i>∂t</i></span></span>
                  <b class="op">+</b><span class="sym">∇</span><b class="op">·</b><span class="sym">(</span><i>-c</i><span class="sym">∇</span><i>T</i>
                  <i class="minus">-</i><b class="greek">α</b><i>T</i><b class="op">+</b><b class="greek">γ</b><span class="sym">)</span>
                  <b class="op">+</b><b class="greek">β</b><b class="op">·</b><span class="sym">∇</span><i>T</i><b class="op">+</b><i>aT</i><b class="op">=</b><i>f</i>
                </div>
                <div class="formula">
                  <span class="sym">∇</span><b class="op eq">=</b><span class="sym">[</span>
                  <span class="frac"><span><i>∂</i></span><span><i>∂x</i></span></span><b>,</b>
                  <span class="frac"><span><i>∂</i></span><span><i>∂y</i></span></span><span class="sym">]</span>
                </div>
              </div>

              <h3 class="section"><svg class="caret-m"><use href="#i-caret" /></svg>Diffusion Coefficient</h3>
              <div class="field">
                <label for="diffusion"><i>c</i></label>
                <div class="stack">
                  <input id="diffusion" v-model="diffusion" type="text" />
                  <div class="select-wrap">
                    <select v-model="isotropy" aria-label="Isotropy"><option>Isotropic</option></select>
                    <svg class="caret-m"><use href="#i-caret" /></svg>
                  </div>
                </div>
                <span class="unit unit-top">1</span>
              </div>

              <template v-for="c in coefficients" :key="c.id">
                <h3 class="section"><svg class="caret-m"><use href="#i-caret" /></svg>{{ c.title }}</h3>
                <div class="field">
                  <label :for="c.id"><i>{{ c.symbol }}</i><sub v-if="c.sub">{{ c.sub }}</sub></label>
                  <input :id="c.id" v-model="c.value" type="text" />
                  <span class="unit">{{ c.unit }}</span>
                </div>
              </template>

              <h3 v-for="s in closedSections" :key="s" class="section section-closed">
                <svg class="closed" viewBox="0 0 8 12"><path d="M1.500 1v10L7 6Z" fill="#fff" stroke="#999" /></svg>{{ s }}
              </h3>
            </div>
            <div class="scrollbar">
              <svg viewBox="0 0 10 6"><path d="M1 5l4-4 4 4" /></svg>
              <div class="thumb"></div>
              <svg viewBox="0 0 10 6"><path d="M1 1l4 4 4-4" /></svg>
            </div>
          </div>
        </section>

        <div class="right-col">
          <!-- Graphics -->
          <section class="panel graphics">
            <div class="panel-head">
              <h2>Graphics</h2>
              <svg class="caret-m"><use href="#i-caret" /></svg>
              <svg class="pin"><use href="#i-pin" /></svg>
            </div>
            <div class="toolbar toolbar-tall">
              <template v-for="(t, i) in graphicsTools" :key="i">
                <span v-if="t.sep" class="sep"></span>
                <button v-else-if="t.menu" class="tool-menu" :aria-label="t.label"><svg class="caret-m"><use href="#i-caret" /></svg></button>
                <button v-else class="tool" :class="{ 'tool-on': t.on }" :aria-label="t.label">
                  <svg class="ic20"><use :href="'#i-' + t.icon" /></svg>
                </button>
              </template>
            </div>
            <div class="canvas">
              <svg class="plot" viewBox="0 0 939 599">
                <rect :x="px(0) + 0.5" :y="py(1) + 0.5" :width="px(2) - px(0)" :height="py(0) - py(1)" fill="#9898e9" stroke="#0d0dee" />
                <path d="M61 9H926V573H61Z" fill="none" stroke="#808080" stroke-width="2" />
                <g stroke="#808080" stroke-width="2">
                  <path v-for="t in xTicks" :key="'x' + t.label" :d="`M${t.pos} 0v9M${t.pos} 573v9`" />
                  <path v-for="t in yTicks" :key="'y' + t.label" :d="`M52 ${t.pos}h9M926 ${t.pos}h9`" />
                </g>
                <g class="tick-text">
                  <text v-for="t in xTicks" :key="'tx' + t.label" :x="t.pos" y="594">{{ t.label }}</text>
                  <text v-for="t in yTicks" :key="'ty' + t.label" x="51" :y="t.pos + 12" text-anchor="end">{{ t.label }}</text>
                  <text x="65" y="21">m</text>
                  <text x="909" y="568">m</text>
                </g>
                <path d="M56 510l5 6-5 6ZM56 578l5-6 5 6Z" />
                <use href="#i-logo" x="893" y="15" width="26" height="24" />
              </svg>
            </div>
          </section>

          <!-- Messages -->
          <section class="panel messages">
            <div class="log-tabs">
              <button
                v-for="t in logTabs"
                :key="t"
                class="log-tab"
                :class="{ 'log-active': t === activeLog }"
                @click="activeLog = t"
              >{{ t }}</button>
              <div class="log-ctrl">
                <svg class="caret-m"><use href="#i-caret" /></svg>
                <svg class="pin"><use href="#i-pin" /></svg>
                <svg class="close" viewBox="0 0 12 12"><path d="M1 1l10 10M11 1 1 11" stroke-width="2" /></svg>
              </div>
            </div>
            <button class="clear" aria-label="Clear log"><svg class="ic20"><use href="#i-broom" /></svg></button>
            <div class="log-box">
              <div class="log-lines">
                <div v-for="(m, i) in messages" :key="i">{{ m }}</div>
              </div>
              <div class="scrollbar">
                <svg viewBox="0 0 10 6"><path d="M1 5l4-4 4 4" /></svg>
                <div class="thumb"></div>
                <svg viewBox="0 0 10 6"><path d="M1 1l4 4 4-4" /></svg>
              </div>
            </div>
          </section>
        </div>
      </main>

      <footer class="status">
        <span class="memory">876 MB | 1025 MB</span>
        <span class="mark">http://blog.csdn.net/qq_26311095</span>
      </footer>
    </div>
    <div class="below"></div>
  </div>
</template>

<style>
body {
  margin: 0;
  overflow: hidden;
}
</style>

<style scoped>
.desktop {
  display: flex;
  flex-direction: column;
  height: 100vh;
  box-sizing: border-box;
  font-family: "Noto Sans", "Open Sans", sans-serif;
  font-size: 15px;
  color: #111;
  background: #fff;
}
.desktop * {
  box-sizing: border-box;
}
.sprite {
  position: absolute;
  width: 0;
  height: 0;
}
button {
  padding: 0;
  border: 0;
  background: none;
  font: inherit;
  color: inherit;
}
svg {
  flex: none;
}

.window {
  flex: 1;
  min-height: 0;
  display: flex;
  flex-direction: column;
  border: 4px solid #1a82d8;
  border-top-width: 1px;
  border-bottom-width: 1px;
  background: #f9fbff;
}
.below {
  height: 5px;
  border-bottom: 2px solid #000;
}

/* Icon sizes */
.ic20 { width: 20px; height: 20px; display: block; }
.ic40 { width: 40px; height: 40px; display: block; }
.caret-s { width: 6px; height: 4px; fill: currentColor; }
.caret-m { width: 10px; height: 6px; fill: #222; }
.pin { width: 10px; height: 14px; fill: #4a4f57; }

/* Title bar */
.titlebar {
  height: 36px;
  display: flex;
  align-items: center;
  padding: 4px 6px 0 7px;
  background: #fff;
}
.app-logo { width: 20px; height: 20px; }
.bar {
  width: 1px;
  height: 18px;
  margin: 0 4px 0 11px;
  background: #999;
}
.tool {
  width: 29px;
  height: 22px;
  display: flex;
  align-items: center;
  justify-content: center;
}
.quick-menu {
  width: 12px;
  display: flex;
  justify-content: flex-end;
}
.quick-menu + .bar { margin-left: 10px; }
.title {
  flex: 1;
  padding: 0 0 6px 118px;
  font-size: 16px;
  text-align: center;
}
.win-btn {
  width: 58px;
  height: 28px;
  margin-bottom: 6px;
}
.win-btn svg {
  width: 14px;
  height: 14px;
  fill: none;
  stroke: #222;
}

/* Tabs */
.tabs {
  height: 29px;
  display: flex;
  align-items: stretch;
  padding: 0 9px;
  font-size: 16px;
  color: #2b579a;
}
.file-tab {
  width: 70px;
  margin-right: 3px;
  color: #fff;
  background: #2b579a;
  border: 1px solid #1f4685;
  line-height: 24px;
}
.file-caret { width: 10px; height: 8px; fill: #fff; }
.tab {
  padding: 4px 15px 0;
  margin-right: 1px;
  line-height: 24px;
}
.tab-active {
  position: relative;
  margin: 1px 2px -2px 0;
  padding: 1px 12px 0;
  background: #fff;
  border: 1px solid #a8c4e0;
  border-bottom: 0;
  border-radius: 4px 4px 0 0;
}
.help {
  width: 14px;
  height: 14px;
  margin: 8px 6px 0 auto;
  background: #4a80bd;
  color: #fff;
  font-size: 11px;
  line-height: 14px;
}

/* Ribbon */
.ribbon {
  display: flex;
  height: 115px;
  margin: 0 9px;
  border: 1px solid #b7c8de;
  background: linear-gradient(#fff, #fafcff);
  font-size: 16px;
}
.group {
  position: relative;
  display: flex;
  flex-direction: column;
  align-items: center;
  padding-top: 6px;
}
.group::after {
  content: "";
  position: absolute;
  top: 8px;
  right: 0;
  width: 1px;
  height: 94px;
  background: #b7c8de;
}
.group-body {
  display: flex;
  justify-content: center;
  height: 82px;
}
.loose { gap: 4px; }
.big {
  display: flex;
  flex-direction: column;
  align-items: center;
  justify-content: flex-start;
  padding: 0 4px;
  line-height: 16px;
}
.big .ic40 { margin-bottom: 5px; }
.second {
  display: flex;
  align-items: center;
  gap: 4px;
  min-height: 16px;
}
.small-list {
  display: flex;
  flex-direction: column;
  font-size: 15px;
}
.small {
  display: flex;
  align-items: center;
  gap: 3px;
  height: 28px;
  padding: 0 3px;
}
.small:first-child { height: 26px; }
.small .caret-s { margin-left: 1px; }
.glyph {
  min-width: 20px;
  font-size: 12px;
  color: #4f83bd;
  white-space: nowrap;
}
.disabled { color: #c4c4c4; }
.group-name {
  line-height: 22px;
  color: #a0a0a0;
}

/* Panels */
.work {
  flex: 1;
  min-height: 0;
  display: grid;
  grid-template-columns: 414fr 527fr 941fr;
  gap: 6px;
  padding: 5px 9px 6px;
}
.panel {
  min-height: 0;
  min-width: 0;
  display: flex;
  flex-direction: column;
  border: 1px solid #ccd2da;
}
.panel-active { border-color: #8cc8f5; }
.panel-head {
  display: flex;
  align-items: center;
  gap: 8px;
  height: 38px;
  padding: 6px 4px 0 9px;
}
.panel h2 {
  flex: 1;
  margin: 0;
  font-size: 24px;
  line-height: 32px;
  font-weight: 300;
  color: #2b579a;
}
.panel-active h2 { color: #1a8fe3; }
.panel-head .caret-m,
.panel-head .pin { margin-bottom: 3px; }
.panel:not(.panel-active) .panel-head svg,
.log-ctrl svg { fill: #ccd3de; }
.toolbar {
  display: flex;
  align-items: center;
  height: 27px;
  padding-left: 2px;
  margin-bottom: 3px;
}
.toolbar-tall {
  height: 30px;
  margin: 0;
  padding-bottom: 2px;
}
.tool-menu {
  width: 24px;
  padding-left: 4px;
  display: flex;
}
.panel-active .tool-menu {
  width: 22px;
  padding-left: 3px;
}
.tool-on {
  width: 22px;
  height: 22px;
  margin: 0 3px 0 4px;
  border: 1px solid #2b579a;
  border-radius: 3px;
  background: #a9d4f5;
}
.sep {
  width: 20px;
  height: 20px;
  background: linear-gradient(#ccc, #ccc) 8px 0 / 1px 100% no-repeat;
}

/* Tree */
.tree {
  flex: 1;
  margin: 0 5px 10px;
  padding: 2px 0;
  list-style: none;
  border: 1px solid #c8cdd3;
  background: #fff;
}
.node {
  display: flex;
  align-items: center;
  height: 22px;
}
.twist {
  width: 24px;
  display: flex;
  justify-content: center;
  padding-right: 1px;
}
.twist svg { width: 10px; height: 10px; }
.node-label {
  display: flex;
  align-items: center;
  gap: 5px;
  padding: 0 4px 0 1px;
  line-height: 22px;
}
.selected { background: #a0d3fa; }

/* Settings */
.subtitle {
  height: 34px;
  padding: 5px 9px 0;
  font-size: 17px;
  line-height: 24px;
  font-weight: 300;
  color: #2b579a;
}
.scroll-row {
  flex: 1;
  min-height: 0;
  display: flex;
  padding-right: 1px;
}
.sections {
  flex: 1;
  min-width: 0;
  overflow: hidden;
}
.strip {
  height: 5px;
  margin-bottom: 3px;
  background: #dfe9f5;
}
.section {
  display: flex;
  align-items: center;
  gap: 19px;
  height: 32px;
  margin: 0;
  padding: 0 0 2px 7px;
  font-size: 17px;
  font-weight: 400;
  background: #dfe9f5;
}
.section .caret-m { fill: #444; }
.section-closed { margin-bottom: 3px; }
.closed {
  width: 8px;
  height: 12px;
  margin: 0 1px;
}
.equation-body {
  height: 179px;
  padding: 12px 7px 0 6px;
}
.equation-body label {
  display: block;
  height: 28px;
  line-height: 20px;
}
.select-wrap {
  position: relative;
}
.select-wrap .caret-m {
  position: absolute;
  right: 4px;
  top: 11px;
  pointer-events: none;
}
select {
  appearance: none;
  display: block;
  width: 100%;
  height: 26px;
  padding: 0 13px 2px;
  border: 2px solid #9c9c9c;
  border-radius: 3px;
  background: linear-gradient(#f1f1f1, #e6e6e6);
  font: inherit;
  line-height: 20px;
  color: #111;
}
input {
  flex: 1;
  min-width: 0;
  height: 24px;
  padding: 0 3px 1px;
  border: 2px solid #d4d6da;
  border-bottom-width: 1px;
  background: #fff;
  font: inherit;
  color: #111;
}
.field {
  display: flex;
  align-items: center;
  padding: 12px 7px 14px;
}
.field label {
  margin-right: 16px;
  padding-bottom: 2px;
}
sub {
  font-size: 12px;
  line-height: 0;
  vertical-align: -4px;
}
.field i { font-size: 16px; }
.stack {
  flex: 1;
  display: flex;
  flex-direction: column;
  gap: 8px;
}
.stack input { flex: none; }
.unit { margin-left: 14px; }
.unit-top {
  align-self: flex-start;
  line-height: 24px;
}
.formula {
  display: flex;
  align-items: center;
  height: 48px;
  margin-top: 4px;
  font-size: 16px;
  line-height: 20px;
}
.formula + .formula { margin-top: 0; }
.formula sub {
  align-self: center;
  padding-top: 12px;
}
.frac {
  display: inline-flex;
  flex-direction: column;
  align-items: center;
}
.frac > span:first-child { border-bottom: 1px solid #111; }
.frac > span {
  padding: 0 1px;
  font-size: 19px;
  line-height: 20px;
  white-space: nowrap;
}
.frac .v { font-size: 16px; }
.frac sup {
  font-size: 12px;
  line-height: 0;
}
.op {
  font-size: 22px;
  font-weight: 400;
  margin: 0 4px;
}
.op.eq { margin: 0 1px 0 4px; }
.sym { font-size: 20px; }
.greek {
  font-size: 18px;
  font-style: italic;
}
.minus { margin: 0 5px; }

/* Scroll bars */
.scrollbar {
  width: 21px;
  display: flex;
  flex-direction: column;
  align-items: center;
  justify-content: space-between;
  padding: 7px 0;
  background: #f0f0f0;
}
.scrollbar svg {
  width: 10px;
  height: 7px;
  fill: none;
  stroke: #888;
  stroke-width: 1.4px;
}
.thumb {
  width: 100%;
  height: 512px;
  margin: auto 0 7px;
  background: #cdcdcd;
}

/* Graphics */
.right-col {
  min-height: 0;
  display: flex;
  flex-direction: column;
  gap: 7px;
}
.graphics { flex: 1; }
.canvas {
  flex: 1;
  min-height: 0;
  background: #fff;
}
.plot {
  display: block;
  width: 100%;
  height: 100%;
}
.tick-text {
  font: 15px "DejaVu Sans", sans-serif;
  fill: #111;
}

/* Messages */
.messages { height: 166px; }
.log-tabs {
  display: flex;
  height: 38px;
  padding: 6px 4px 0 5px;
  border-bottom: 1px solid #ccd2da;
  font-size: 17px;
}
.log-tab {
  height: 31px;
  padding: 0 6px;
  margin-right: 10px;
  background: #ebebeb;
}
.log-active {
  height: 32px;
  padding: 0 6px;
  color: #2b579a;
  background: #f9fbff;
  border: 1px solid #ccd2da;
  border-bottom: 0;
}
.log-ctrl {
  display: flex;
  align-items: center;
  gap: 8px;
  margin-left: auto;
  padding-top: 4px;
}
.close {
  width: 11px;
  height: 12px;
  stroke: #ccd3de;
}
.clear {
  width: 20px;
  height: 35px;
  margin: 0 8px;
}
.log-box {
  flex: 1;
  min-height: 0;
  display: flex;
  margin: 0 6px 6px 5px;
  border: 1px solid #ccd2da;
  overflow: hidden;
}
.log-lines {
  flex: 1;
  display: flex;
  flex-direction: column;
  margin-top: -16px;
  padding-left: 2px;
  line-height: 20px;
}
.log-box .thumb {
  height: 22px;
  margin: 24px 0 0;
}

/* Status bar */
.status {
  height: 40px;
  display: flex;
  align-items: center;
  justify-content: space-between;
  padding: 0 6px 0 1020px;
  background: #f0edec;
}
.mark {
  padding-top: 10px;
  font: 17px "Liberation Mono", monospace;
  color: #cbc8c8;
}
</style>
